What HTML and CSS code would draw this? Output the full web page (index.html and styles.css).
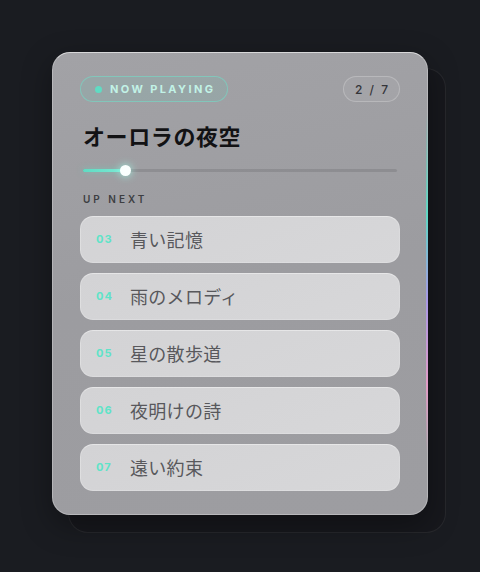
FILE: index.html
```html
<!DOCTYPE html>
<html lang="ja">
<head>
<meta charset="utf-8">
<link rel="stylesheet" href="styles.css">
</head>
<body>
<div class="card">
  <div class="top">
    <div class="pill-now"><span class="dot"></span><span>NOW PLAYING</span></div>
    <div class="pill-count">2 / 7</div>
  </div>
  <h1 class="title">オーロラの夜空</h1>
  <div class="progress">
    <div class="fill"></div>
    <div class="knob"></div>
  </div>
  <div class="label">UP NEXT</div>
  <ul class="list">
    <li class="item"><span class="num">03</span><span class="name">青い記憶</span></li>
    <li class="item"><span class="num">04</span><span class="name">雨のメロディ</span></li>
    <li class="item"><span class="num">05</span><span class="name">星の散歩道</span></li>
    <li class="item"><span class="num">06</span><span class="name">夜明けの詩</span></li>
    <li class="item"><span class="num">07</span><span class="name">遠い約束</span></li>
  </ul>
</div>
</body>
</html>
```

FILE: styles.css
```css
* { box-sizing: border-box; }
html, body { margin: 0; padding: 0; }
body {
  background: #1a1c21;
  width: 480px;
  height: 572px;
  overflow: hidden;
  font-family: Inter, "Noto Sans", "Noto Sans CJK JP", sans-serif;
}
.card {
  position: relative;
  margin: 52px 0 0 52px;
  width: 376px;
  height: 463px;
  border-radius: 18px;
  background: linear-gradient(170deg, #a2a2a6 0%, #9c9ca0 50%, #9d9da1 100%);
  border: 1px solid rgba(255,255,255,0.25);
  border-top-color: rgba(255,255,255,0.6);
  padding: 23px 27px 0 27px;
  box-shadow: 0 10px 30px rgba(0,0,0,0.35);
}
.card::before {
  content: "";
  position: absolute;
  left: 15px; top: 15px;
  width: 376px; height: 463px;
  border-radius: 20px;
  background: #17181d;
  border: 1px solid rgba(255,255,255,0.07);
  z-index: -1;
}
.card::after {
  content: "";
  position: absolute;
  right: -1px;
  top: 60px;
  width: 2px;
  height: 340px;
  background: linear-gradient(180deg, rgba(94,224,200,0) 0%, #5fd8c4 30%, #a898e6 55%, #e29cc6 80%, rgba(226,156,198,0) 100%);
}
.top {
  display: flex;
  justify-content: space-between;
  align-items: center;
}
.pill-now {
  display: flex;
  align-items: center;
  gap: 8px;
  height: 26px;
  width: 148px;
  padding-left: 14px;
  border-radius: 13px;
  border: 1px solid rgba(110,230,205,0.5);
  background: rgba(110,190,180,0.18);
  color: #c2f2e6;
  font-size: 11px;
  font-weight: 700;
  letter-spacing: 2.4px;
}
.dot {
  width: 7px; height: 7px;
  border-radius: 50%;
  background: #5fdcc3;
}
.pill-count {
  height: 26px;
  width: 57px;
  border-radius: 13px;
  border: 1px solid rgba(255,255,255,0.22);
  background: rgba(255,255,255,0.05);
  display: flex;
  align-items: center;
  justify-content: center;
  color: #34353a;
  font-size: 12px;
  font-weight: 500;
  letter-spacing: 2px;
  padding-left: 2px;
}
.title {
  margin: 18px 0 0 3px;
  font-family: "Noto Sans CJK JP", sans-serif;
  font-size: 22px;
  line-height: 30px;
  font-weight: 700;
  letter-spacing: 0.6px;
  color: #121214;
}
.progress {
  position: relative;
  margin: 15px 3px 0 3px;
  height: 10px;
  display: flex;
  align-items: center;
}
.progress::before {
  content: "";
  position: absolute;
  left: 0; right: 0;
  top: 4px;
  height: 3px;
  border-radius: 2px;
  background: rgba(80,80,86,0.22);
}
.fill {
  position: relative;
  width: 42px;
  height: 3px;
  border-radius: 2px;
  background: linear-gradient(90deg, #5fdcc3, #7ce9d4);
  box-shadow: 0 0 6px rgba(95,220,195,0.6);
}
.knob {
  position: relative;
  width: 11px; height: 11px;
  margin-left: -5px;
  border-radius: 50%;
  background: #fafffe;
  box-shadow: 0 0 8px rgba(160,255,235,0.9);
}
.label {
  margin: 17px 0 0 3px;
  font-size: 10px;
  line-height: 14px;
  font-weight: 600;
  letter-spacing: 3px;
  color: #3d3e42;
}
.list {
  list-style: none;
  margin: 10px 0 0 0;
  padding: 0;
  display: flex;
  flex-direction: column;
  gap: 10px;
}
.item {
  display: flex;
  align-items: center;
  height: 47px;
  border-radius: 13px;
  background: linear-gradient(160deg, #d3d3d5, #d7d7d9);
  border: 1px solid rgba(255,255,255,0.2);
  border-top-color: rgba(255,255,255,0.4);
  padding-left: 15px;
  padding-bottom: 1px;
}
.num {
  width: 34px;
  font-size: 11px;
  font-weight: 700;
  letter-spacing: 1px;
  color: #5fe3c8;
}
.name {
  font-family: "Noto Sans CJK JP", sans-serif;
  font-size: 18px;
  color: #58585c;
  letter-spacing: 0.3px;
}
```
